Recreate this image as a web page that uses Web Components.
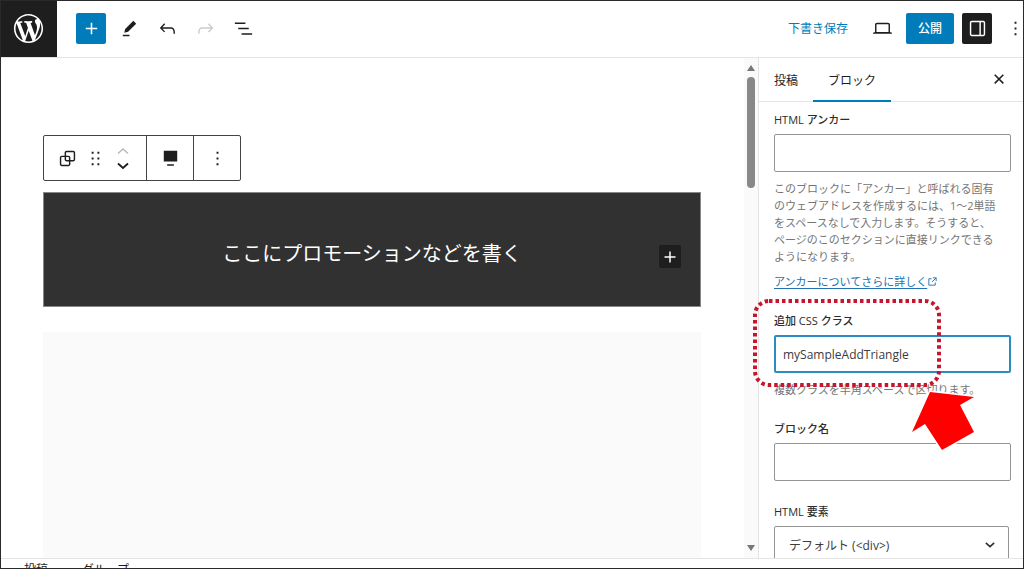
<!DOCTYPE html>
<html lang="ja">
<head>
<meta charset="utf-8">
<meta name="viewport" content="width=device-width, initial-scale=1">
<title>投稿の編集</title>
<style>
  body {
    margin: 0;
    font-family: "Open Sans", "Noto Sans CJK JP", sans-serif;
    font-size: 12px;
    color: #2c2c2c;
    background: #fff;
    --accent: #007cba;
    --ink: #1e1e1e;
    --muted: #757575;
    --line: #e4e4e4;
  }
</style>
</head>
<body>
<post-editor>
  <editor-header slot="header"></editor-header>
  <editor-canvas>
    <block-toolbar slot="toolbar"></block-toolbar>
    <group-block>ここにプロモーションなどを書く</group-block>
    <empty-block></empty-block>
  </editor-canvas>
  <settings-sidebar>
    <text-field label="HTML アンカー">
      <span slot="help">このブロックに「アンカー」と呼ばれる固有のウェブアドレスを作成するには、1～2単語をスペースなしで入力します。そうすると、ページのこのセクションに直接リンクできるようになります。</span>
      <external-link slot="more" href="#anchors">アンカーについてさらに詳しく</external-link>
    </text-field>
    <text-field label="追加 CSS クラス" value="mySampleAddTriangle" active>
      <span slot="help">複数クラスを半角スペースで区切ります。</span>
      <callout-mark slot="mark"></callout-mark>
    </text-field>
    <text-field label="ブロック名"></text-field>
    <select-field label="HTML 要素" options="デフォルト (&lt;div&gt;)"></select-field>
  </settings-sidebar>
  <editor-footer slot="footer"></editor-footer>
</post-editor>

<script>
  const icons = {
    logo: ['-2 -2 24 24', '<path d="M20 10c0-5.51-4.49-10-10-10C4.48 0 0 4.49 0 10c0 5.52 4.48 10 10 10 5.51 0 10-4.48 10-10zM7.78 15.37L4.37 6.22c.55-.02 1.17-.08 1.17-.08.5-.06.44-1.13-.06-1.11 0 0-1.45.11-2.37.11-.18 0-.37 0-.58-.01C4.12 2.69 6.87 1.11 10 1.11c2.33 0 4.45.87 6.05 2.34-.68-.11-1.65.39-1.65 1.58 0 .74.45 1.36.9 2.1.35.61.55 1.36.55 2.46 0 1.49-1.4 5-1.4 5l-3.03-8.37c.54-.02.82-.17.82-.17.5-.05.44-1.25-.06-1.22 0 0-1.44.12-2.38.12-.87 0-2.33-.12-2.33-.12-.5-.03-.56 1.2-.06 1.22l.92.08 1.26 3.41zM17.41 10c.24-.64.74-1.87.43-4.25.7 1.29 1.05 2.71 1.05 4.25 0 3.29-1.73 6.24-4.4 7.78.97-2.59 1.94-5.2 2.92-7.78zM6.1 18.09C3.12 16.65 1.11 13.53 1.11 10c0-1.3.23-2.48.72-3.59C3.25 10.3 4.67 14.2 6.1 18.09zm4.03-6.63l2.58 6.98c-.86.29-1.76.45-2.71.45-.79 0-1.57-.11-2.29-.33.81-2.38 1.62-4.74 2.42-7.1z"/>'],
    plus: ['0 0 24 24', '<path d="M11.2 6h1.6v5.2H18v1.6h-5.2V18h-1.6v-5.2H6v-1.6h5.2z"/>'],
    pencil: ['0 0 24 24', '<path d="m19 7-3-3-8.5 8.5-1 4 4-1L19 7Zm-7 11.5H5V20h7v-1.5Z"/>'],
    undo: ['0 0 24 24', '<path d="M18.3 11.7c-.6-.6-1.4-.9-2.3-.9H6.7l2.9-3.3-1.1-1-4.5 5L8.5 16l1-1-2.7-2.7H16c.5 0 .9.2 1.3.5 1 1 1 3.4 1 4.5v.3h1.5v-.2c0-1.5 0-4.3-1.5-5.7z"/>'],
    redo: ['0 0 24 24', '<path d="M15.6 6.5l-1.1 1 2.9 3.3H8c-.9 0-1.7.3-2.3.9-1.4 1.5-1.4 4.2-1.4 5.6v.2h1.5v-.3c0-1.1 0-3.5 1-4.5.3-.3.7-.5 1.3-.5h9.2L14.5 15l1.1 1.1 4.6-4.6-4.6-5z"/>'],
    list: ['0 0 24 24', '<path d="M3 5.7h11v1.5H3zM6.5 11.2h11v1.5h-11zM10 17h11v1.5H10z"/>'],
    laptop: ['0 0 24 24', '<path d="M20.5 16h-.7V8c0-1.1-.9-2-2-2H6.2c-1.1 0-2 .9-2 2v8h-.7c-.8 0-1.5.7-1.5 1.5h20c0-.8-.7-1.5-1.5-1.5zM5.7 8c0-.3.2-.5.5-.5h11.6c.3 0 .5.2.5.5v7.6H5.7V8z"/>'],
    drawer: ['0 0 24 24', '<path d="M18 4H6c-1.1 0-2 .9-2 2v12c0 1.1.9 2 2 2h12c1.1 0 2-.9 2-2V6c0-1.1-.9-2-2-2zm-4 14.5H6c-.3 0-.5-.2-.5-.5V6c0-.3.2-.5.5-.5h8v13zm4.5-.5c0 .3-.2.5-.5.5h-2.5v-13H18c.3 0 .5.2.5.5v12z"/>'],
    more: ['0 0 24 24', '<path d="M13 19h-2v-2h2v2zm0-6h-2v-2h2v2zm0-6h-2V5h2v2z"/>'],
    group: ['0 0 24 24', '<path d="M18 4h-7c-1.1 0-2 .9-2 2v3H6c-1.1 0-2 .9-2 2v7c0 1.1.9 2 2 2h7c1.1 0 2-.9 2-2v-3h3c1.1 0 2-.9 2-2V6c0-1.1-.9-2-2-2zm-4.5 14c0 .3-.2.5-.5.5H6c-.3 0-.5-.2-.5-.5v-7c0-.3.2-.5.5-.5h3V13c0 1.1.9 2 2 2h2.5v3zm0-4.5H11c-.3 0-.5-.2-.5-.5v-2.5H13c.3 0 .5.2.5.5v2.5zm5-.5c0 .3-.2.5-.5.5h-3V11c0-1.1-.9-2-2-2h-2.5V6c0-.3.2-.5.5-.5h7c.3 0 .5.2.5.5v7z"/>'],
    drag: ['0 0 24 24', '<path d="M8 5h2v2H8zM14 5h2v2h-2zM8 11h2v2H8zM14 11h2v2h-2zM8 17h2v2H8zM14 17h2v2h-2z"/>'],
    up: ['0 0 24 12', '<path d="M7 8.5 12 4l5 4.5" fill="none" stroke="currentColor" stroke-width="1.6"/>'],
    down: ['0 0 24 12', '<path d="M7 3.500 12 8l5-4.500" fill="none" stroke="currentColor" stroke-width="1.8"/>'],
    top: ['0 0 24 24', '<path d="M5 4h14v11H5zM8.500 18h7v1.500h-7z"/>'],
    close: ['0 0 24 24', '<path d="m7 7 9 9M16 7l-9 9" fill="none" stroke="currentColor" stroke-width="1.6"/>'],
    external: ['0 0 24 24', '<path d="M13 4h7v7M20 4l-9 9M10 6H4v14h14v-6" fill="none" stroke="currentColor" stroke-width="2"/>']
  };

  const define = (name, css, html, setup) => {
    customElements.define(name, class extends HTMLElement {
      connectedCallback() {
        if (this.shadowRoot) return;
        const root = this.attachShadow({ mode: 'open' });
        root.innerHTML = `<style>*{box-sizing:border-box}${css}</style>${html}`;
        if (setup) setup(this, root);
      }
    });
  };

  define('ui-icon', `
    :host { display: block; width: 24px; flex: none; }
    svg { display: block; width: 100%; fill: currentColor; }
  `, '', (host, root) => {
    const [box, shape] = icons[host.getAttribute('name')];
    root.innerHTML += `<svg viewBox="${box}" aria-hidden="true">${shape}</svg>`;
  });

  // Square button that holds one icon; "tone" picks its fill.
  define('icon-button', `
    :host { display: block; flex: none; }
    button { display: grid; place-items: center; width: 30px; height: 31px; padding: 0; border: 0; border-radius: 2px; background: none; color: var(--ink); }
    ui-icon { width: 23px; }
    :host([tone="primary"]) button { background: var(--accent); color: #fff; }
    :host([tone="dark"]) button { background: var(--ink); color: #fff; }
    :host([slim]) button { width: 24px; }
    button:disabled { color: #ccc; }
  `, '<button type="button"></button>', (host, root) => {
    const button = root.querySelector('button');
    button.setAttribute('aria-label', host.getAttribute('label'));
    button.disabled = host.hasAttribute('disabled');
    button.innerHTML = `<ui-icon name="${host.getAttribute('icon')}"></ui-icon>`;
  });

  define('post-editor', `
    :host { display: flex; flex-direction: column; height: 100vh; box-sizing: border-box; border: 1px solid #2a2a2a; overflow: hidden; }
    main { display: flex; flex: 1; min-height: 0; overflow: hidden; }
  `, '<slot name="header"></slot><main><slot></slot></main><slot name="footer"></slot>');

  define('editor-header', `
    :host { display: flex; flex: none; align-items: center; justify-content: space-between; height: 57px; box-sizing: border-box; border-bottom: 1px solid var(--line); }
    .home { display: grid; place-items: center; width: 56px; height: 56px; padding: 0 2px 2px 0; background: var(--ink); color: #fff; }
    .home ui-icon { width: 35px; }
    div { display: flex; align-items: center; gap: 8px; }
    .tools { margin-left: 11px; padding-bottom: 2px; }
    .draft { padding: 0 12px; border: 0; background: none; font: inherit; color: var(--accent); }
    .publish { height: 31px; padding: 0 12px; border: 0; border-radius: 2px; background: var(--accent); font: inherit; font-weight: 500; color: #fff; }
    .actions { margin-right: -7px; padding-bottom: 2px; }
  `, `
    <div>
      <a class="home" href="#posts" aria-label="投稿一覧"><ui-icon name="logo"></ui-icon></a>
      <div class="tools">
        <icon-button icon="plus" label="ブロックを追加" tone="primary"></icon-button>
        <icon-button icon="pencil" label="ツール"></icon-button>
        <icon-button icon="undo" label="元に戻す"></icon-button>
        <icon-button icon="redo" label="やり直す" disabled></icon-button>
        <icon-button icon="list" label="リスト表示"></icon-button>
      </div>
    </div>
    <div class="actions">
      <button class="draft" type="button">下書き保存</button>
      <icon-button icon="laptop" label="プレビュー"></icon-button>
      <button class="publish" type="button">公開</button>
      <icon-button icon="drawer" label="設定" tone="dark"></icon-button>
      <icon-button icon="more" label="オプション"></icon-button>
    </div>
  `);

  define('editor-canvas', `
    :host { display: flex; flex: 1; min-width: 0; }
    .page { display: flex; flex: 1; flex-direction: column; min-width: 0; padding: 77px 43px 0 42px; }
    .rail { display: flex; flex-direction: column; align-items: center; width: 14px; padding: 7px 0; background: #fafafa; }
    .rail i { border: 4px solid transparent; }
    .rail .up { border-top: 0; border-bottom: 6px solid #777; }
    .rail .down { border-bottom: 0; border-top: 6px solid #777; margin-top: auto; }
    .thumb { width: 8px; height: 111px; margin-top: 6px; border-radius: 4px; background: #888; }
  `, `
    <div class="page"><slot name="toolbar"></slot><slot></slot></div>
    <div class="rail" aria-hidden="true"><i class="up"></i><span class="thumb"></span><i class="down"></i></div>
  `);

  define('block-toolbar', `
    :host { display: flex; align-self: flex-start; height: 46px; box-sizing: border-box; border: 1px solid #444; border-radius: 2px; }
    div { display: flex; align-items: center; padding: 0 11px; gap: 4px; }
    div + div { border-left: 1px solid #444; }
    .mover { display: flex; flex-direction: column; gap: 3px; }
    .mover button { display: block; padding: 0; border: 0; background: none; color: var(--ink); }
    .mover button:disabled { color: #bbb; }
  `, `
    <div>
      <icon-button icon="group" label="グループ" slim></icon-button>
      <icon-button icon="drag" label="ドラッグ" slim></icon-button>
      <span class="mover">
        <button type="button" aria-label="上に移動" disabled><ui-icon name="up"></ui-icon></button>
        <button type="button" aria-label="下に移動"><ui-icon name="down"></ui-icon></button>
      </span>
    </div>
    <div><icon-button icon="top" label="配置" slim></icon-button></div>
    <div><icon-button icon="more" label="オプション" slim></icon-button></div>
  `);

  define('group-block', `
    :host { display: grid; grid-template-columns: 1fr auto 1fr; align-items: center; height: 115px; margin-top: 11px; padding: 0 19px; box-sizing: border-box; border: 1px solid #888; background: #313131; color: #fff; }
    p { grid-column: 2; margin: 0; padding-top: 8px; font-size: 20px; line-height: 30px; }
    button { display: grid; place-items: center; justify-self: end; width: 22px; height: 23px; margin-top: 14px; padding: 0; border: 0; border-radius: 2px; background: var(--ink); color: #fff; }
    ui-icon { width: 22px; }
  `, '<p><slot></slot></p><button type="button" aria-label="ブロックを追加"><ui-icon name="plus"></ui-icon></button>');

  define('empty-block', ':host { display: block; flex: 1; margin-top: 25px; background: #fafafa; }', '');

  define('settings-sidebar', `
    :host { display: block; flex: none; width: 265px; box-sizing: border-box; border-left: 1px solid var(--line); }
    header { display: flex; height: 44px; border-bottom: 1px solid var(--line); }
    header button { padding: 0 15px; border: 0; background: none; font: inherit; color: var(--ink); }
    header button[aria-selected="true"] { box-shadow: inset 0 -2px var(--accent); margin-bottom: -1px; }
    [role="tablist"] { display: flex; flex: 1; }
    icon-button { align-self: center; margin-right: 9px; }
    section { display: flex; flex-direction: column; gap: 22px; padding: 9px 12px 0 15px; }
  `, `
    <header>
      <div role="tablist">
        <button role="tab" type="button" aria-selected="false">投稿</button>
        <button role="tab" type="button" aria-selected="true">ブロック</button>
      </div>
      <icon-button icon="close" label="設定を閉じる"></icon-button>
    </header>
    <section><slot></slot></section>
  `);

  define('text-field', `
    :host { display: flex; flex-direction: column; position: relative; font-size: 11px; line-height: 17px; }
    :host([active]) { z-index: 1; }
    label { font-weight: 500; }
    input { width: 100%; height: 38px; margin-top: 6px; padding: 0 9px; border: 1px solid #949494; border-radius: 2px; background: #fff; font: inherit; font-size: 12px; color: #3c3c3c; outline: 0; }
    :host([active]) input { border: 2px solid #2b8cc4; padding: 0 7px; }
    ::slotted([slot="help"]) { margin-top: 8px; padding-right: 14px; color: var(--muted); }
    ::slotted([slot="more"]) { margin-top: 8px; }
  `, '<label for="box"></label><input id="box" type="text"><slot name="help"></slot><slot name="more"></slot><slot name="mark"></slot>',
  (host, root) => {
    root.querySelector('label').textContent = host.getAttribute('label');
    root.querySelector('input').value = host.getAttribute('value') || '';
  });

  define('select-field', `
    :host { display: flex; flex-direction: column; font-size: 11px; line-height: 17px; }
    label { font-weight: 500; }
    span { display: grid; align-items: center; margin: 6px 2px 0 0; }
    select, ui-icon { grid-area: 1 / 1; }
    select { appearance: none; height: 38px; padding: 0 14px; border: 1px solid #949494; border-radius: 2px; background: #fff; font: inherit; font-size: 12px; color: #3c3c3c; }
    ui-icon { justify-self: end; width: 20px; margin-right: 9px; pointer-events: none; }
  `, '<label for="pick"></label><span><select id="pick"></select><ui-icon name="down"></ui-icon></span>',
  (host, root) => {
    root.querySelector('label').textContent = host.getAttribute('label');
    root.querySelector('select').add(new Option(host.getAttribute('options')));
  });

  define('external-link', `
    :host { display: block; }
    a { display: flex; align-items: center; color: #2271b1; text-decoration: none; }
    span { text-decoration: underline; text-underline-offset: 2px; }
    ui-icon { width: 11px; }
  `, '<a><span><slot></slot></span><ui-icon name="external"></ui-icon></a>',
  (host, root) => { root.querySelector('a').href = host.getAttribute('href'); });

  // Dotted frame and arrow laid over the field that is being explained.
  define('callout-mark', `
    :host { position: absolute; left: -22px; top: -14px; width: 230px; pointer-events: none; }
    svg { display: block; width: 100%; }
  `, `
    <svg viewBox="0 0 230 160" aria-hidden="true">
      <rect x="3" y="3" width="184" height="84" rx="14" fill="none" stroke="#c8142c" stroke-width="4" stroke-dasharray="3.500 3"/>
      <path d="M178 94l44 5-14 8 14 27-32 18-17-26-13 8z" fill="#fe0000" stroke="#fff" stroke-width="3" paint-order="stroke"/>
    </svg>
  `);

  define('editor-footer', `
    :host { display: block; flex: none; height: 10px; box-sizing: border-box; overflow: hidden; border-top: 1px solid var(--line); background: #fff; }
    nav { display: flex; gap: 15px; padding: 2px 23px 0; line-height: 18px; }
    a { color: var(--ink); text-decoration: none; }
  `, '<nav aria-label="パンくずリスト"><a href="#post">投稿</a><span>›</span><a href="#group">グループ</a></nav>');
</script>
</body>
</html>
